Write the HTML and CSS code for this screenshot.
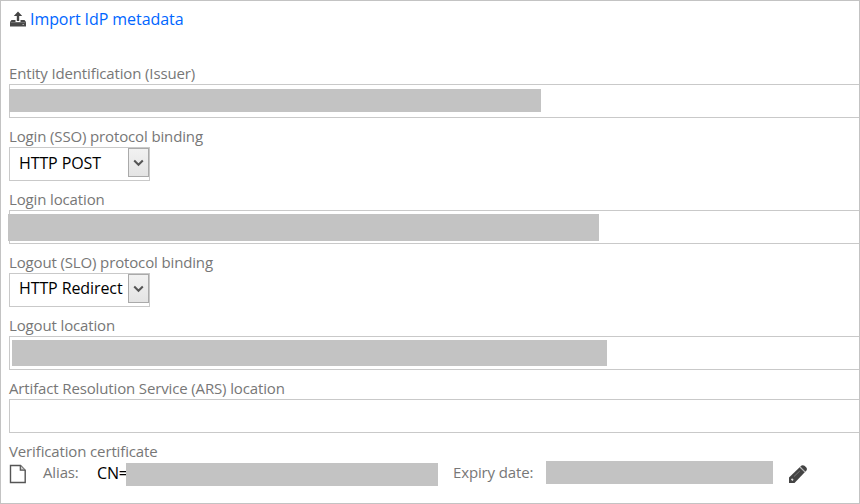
FILE: index.html
```
<!DOCTYPE html>
<html lang="en">
<head>
<meta charset="utf-8">
<title>IdP settings</title>
<link rel="stylesheet" href="styles.css">
</head>
<body>
<main class="panel">
  <a class="import">
    <svg class="import-icon" width="16" height="16" viewBox="0 0 16 16"><path d="M8 .5 12.2 5H9.2V10H6.8V5H3.8z" fill="#444"/><path d="M1.5 9H5.5V11H10.5V9H14.5L16 11V15.5H0V11z" fill="#484848"/><path d="M.5 11.5h15" stroke="#888" stroke-width=".6"/><path d="M12.5 13.5h1.5" stroke="#aaa"/></svg>
    <span>Import IdP metadata</span>
  </a>
  <div class="field">
    <div class="label"><span>Entity Identification (Issuer)</span></div>
    <div class="input"><span class="mask mask-issuer"></span></div>
  </div>
  <div class="field">
    <div class="label"><span>Login (SSO) protocol binding</span></div>
    <div class="select"><span class="value">HTTP POST</span><span class="arrow"><svg width="11" height="8" viewBox="0 0 11 8"><path d="M1.2 1.5 5.5 5.8 9.8 1.5" fill="none" stroke="#555" stroke-width="2"/></svg></span></div>
  </div>
  <div class="field">
    <div class="label"><span>Login location</span></div>
    <div class="input"><span class="mask mask-login"></span></div>
  </div>
  <div class="field">
    <div class="label"><span>Logout (SLO) protocol binding</span></div>
    <div class="select select-logout"><span class="value">HTTP Redirect</span><span class="arrow"><svg width="11" height="8" viewBox="0 0 11 8"><path d="M1.2 1.5 5.5 5.8 9.8 1.5" fill="none" stroke="#555" stroke-width="2"/></svg></span></div>
  </div>
  <div class="field">
    <div class="label"><span>Logout location</span></div>
    <div class="input"><span class="mask mask-logout"></span></div>
  </div>
  <div class="field">
    <div class="label"><span>Artifact Resolution Service (ARS) location</span></div>
    <div class="input"></div>
  </div>
  <div class="label label-cert"><span>Verification certificate</span></div>
  <div class="cert">
    <svg class="file" width="18" height="20" viewBox="0 0 18 20"><path d="M1.5 1.5H11.5L16.2 6.2V18.5H1.5z" fill="#fff" stroke="#555" stroke-width="1.4"/><path d="M11.3 1.5V6.2H16.2" fill="#ccc" stroke="#555" stroke-width="1.2"/></svg>
    <span class="alias">Alias:</span>
    <span class="cn">CN=</span>
    <span class="mask mask-alias"></span>
    <span class="expiry">Expiry date:</span>
    <span class="mask mask-expiry"></span>
    <svg class="pencil" width="18" height="18" viewBox="0 0 18 18"><path d="M0 18V12.5L12.5 .6Q14 -.4 15.5 .8L17.3 2.6Q18.5 4 17.4 5.5L5.5 18z" fill="#444"/><path d="M11 2 16.2 7.2" stroke="#bbb" stroke-width="1.2"/><path d="M5 11.5 10.8 6" stroke="#888" stroke-width=".8"/><path d="M2.5 13.8 4 15.3" stroke="#ddd" stroke-width="1.8"/></svg>
  </div>
</main>
</body>
</html>
```
FILE: styles.css
```
* { box-sizing: border-box; }
body { margin: 0; background: #fff; }
.panel {
  height: 504px;
  padding: 8px 0 0 8px;
  border: 1px solid #c3c3c3;
  overflow: hidden;
  font: 15px/20px "Open Sans", sans-serif;
  letter-spacing: -0.14px;
  color: #777;
  white-space: nowrap;
}
.import {
  display: flex;
  align-items: center;
  height: 20px;
  margin-bottom: 26px;
  gap: 4px;
  padding-left: 1px;
  font-size: 16px;
  letter-spacing: -0.07px;
  color: #0066ff;
}
.label {
  height: 29px;
  padding-top: 8px;
}
.label-cert { height: 28px; }
.input {
  display: flex;
  height: 34px;
  border: 1px solid #c9c9c9;
  border-right: 0;
}
.mask { flex: none; background: #c3c3c3; }
.mask-issuer { width: 532px; height: 23px; margin: 4px 0 0 -1px; }
.mask-login { width: 591px; height: 27px; margin: 3px 0 0 -2px; }
.mask-logout { width: 595px; height: 26px; margin: 3px 0 0 2px; }
.select {
  display: flex;
  justify-content: space-between;
  width: 141px;
  height: 34px;
  border: 1px solid #c9c9c9;
  padding-left: 9px;
  font-size: 16px;
  line-height: 30px;
  letter-spacing: -0.1px;
  color: #000;
}
.select-logout { line-height: 28px; }
.arrow {
  display: flex;
  align-items: center;
  justify-content: center;
  width: 21px;
  height: 29px;
  border: 1px solid #aaa;
  background: linear-gradient(#f1f1f1, #e4e4e4);
}
.cert {
  display: flex;
  align-items: flex-start;
  height: 28px;
}
.file { flex: none; margin-top: 3px; }
.alias { width: 54px; margin: 1px 0 0 16px; }
.cn { width: 29px; margin-top: 2px; font-size: 16px; color: #000; }
.mask-alias { width: 312px; height: 23px; margin-top: 2px; }
.expiry { width: 93px; margin: 1px 0 0 15px; }
.mask-expiry { width: 227px; height: 23px; }
.pencil { margin: 4px 0 0 16px; }
```
